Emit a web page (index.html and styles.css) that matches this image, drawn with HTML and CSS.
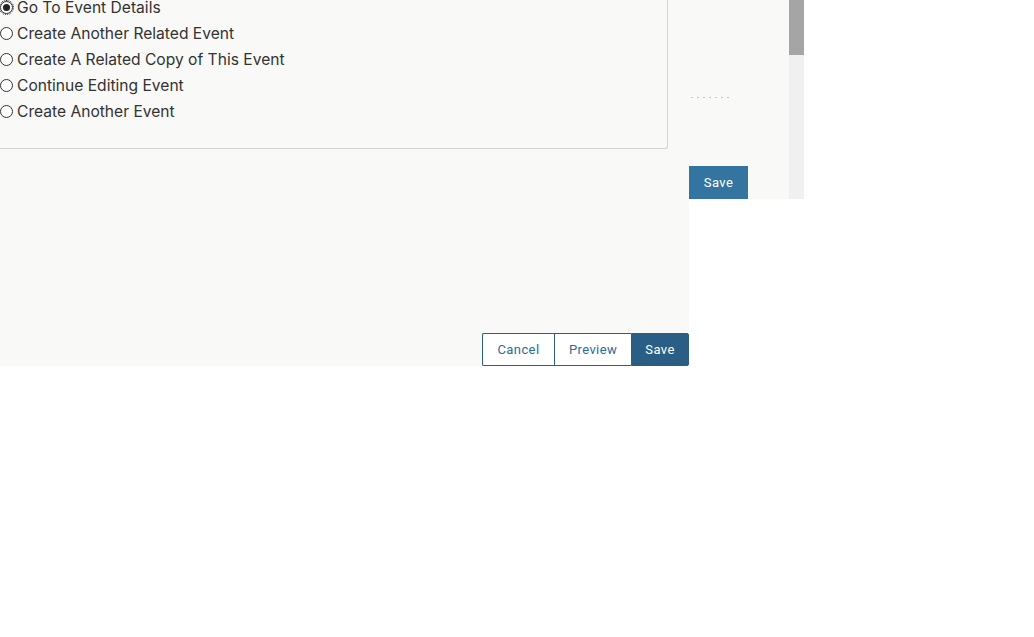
FILE: index.html
```html
<!DOCTYPE html>
<html>
<head>
<meta charset="utf-8">
<link rel="stylesheet" href="styles.css">
</head>
<body>
<div class="app">
  <div class="main">
    <div class="panel">
      <ul class="options">
        <li class="opt checked focus"><span class="radio"></span>Go To Event Details</li>
        <li class="opt"><span class="radio"></span>Create Another Related Event</li>
        <li class="opt"><span class="radio"></span>Create A Related Copy of This Event</li>
        <li class="opt"><span class="radio"></span>Continue Editing Event</li>
        <li class="opt"><span class="radio"></span>Create Another Event</li>
      </ul>
    </div>
    <div class="footer">
      <button class="btn outline">Cancel</button>
      <button class="btn outline mid">Preview</button>
      <button class="btn solid">Save</button>
    </div>
  </div>
  <div class="side">
    <div class="dots"></div>
    <button class="btn side-save">Save</button>
  </div>
  <div class="scroll"><div class="thumb"></div></div>
</div>
</body>
</html>
```
FILE: styles.css
```css
html, body { margin: 0; padding: 0; background: #fff; }
body { font-family: Inter, Roboto, sans-serif; color: #333; }
.app { display: flex; align-items: flex-start; }
.main { width: 689px; height: 366px; background: #f9f9f7; display: flex; flex-direction: column; }
.panel { width: 667px; height: 148px; border-right: 1px solid #d3d3d1; border-bottom: 1px solid #d3d3d1; border-bottom-right-radius: 3px; box-sizing: content-box; }
.options { list-style: none; margin: -5px 0 0 0; padding: 0; }
.opt { display: flex; align-items: center; height: 26px; font-size: 15.6px; line-height: 26px; color: #333; }
.radio { width: 11px; height: 11px; border: 1px solid #333; border-radius: 50%; background: #fff; margin-right: 4px; position: relative; flex: none; top: -1px; }
.checked .radio::after { content: ""; position: absolute; left: 2px; top: 2px; width: 7px; height: 7px; border-radius: 50%; background: #222; }
.focus .radio { outline: 1px dotted #222; outline-offset: 0; }
.footer { margin-top: auto; display: flex; justify-content: flex-end; }
.btn { font-family: Roboto, sans-serif; font-size: 13px; letter-spacing: 0.4px; height: 33px; margin: 0; cursor: pointer; }
.outline { background: #fff; color: #2d6b98; border: 1px solid #2b5f86; border-right: none; }
.outline:first-child { width: 72px; border-radius: 2px 0 0 2px; }
.mid { width: 77px; }
.solid { width: 58px; background: #2a5e85; color: #fff; border: 1px solid #2a5e85; border-radius: 0 2px 2px 0; }
.side { width: 100px; height: 199px; background: #f9f9f7; display: flex; flex-direction: column; }
.dots { margin: 97px 0 0 2px; width: 38px; height: 1px; background-image: linear-gradient(to right, #c8c8c8 0 2px, transparent 2px 6px); background-size: 6px 1px; }
.side-save { margin-top: 68px; width: 59px; background: #3474a0; color: #fff; border: none; border-radius: 0; padding: 0; }
.scroll { width: 15px; height: 199px; background: #f0f0f0; }
.thumb { height: 55px; background: #a5a5a5; }
```
